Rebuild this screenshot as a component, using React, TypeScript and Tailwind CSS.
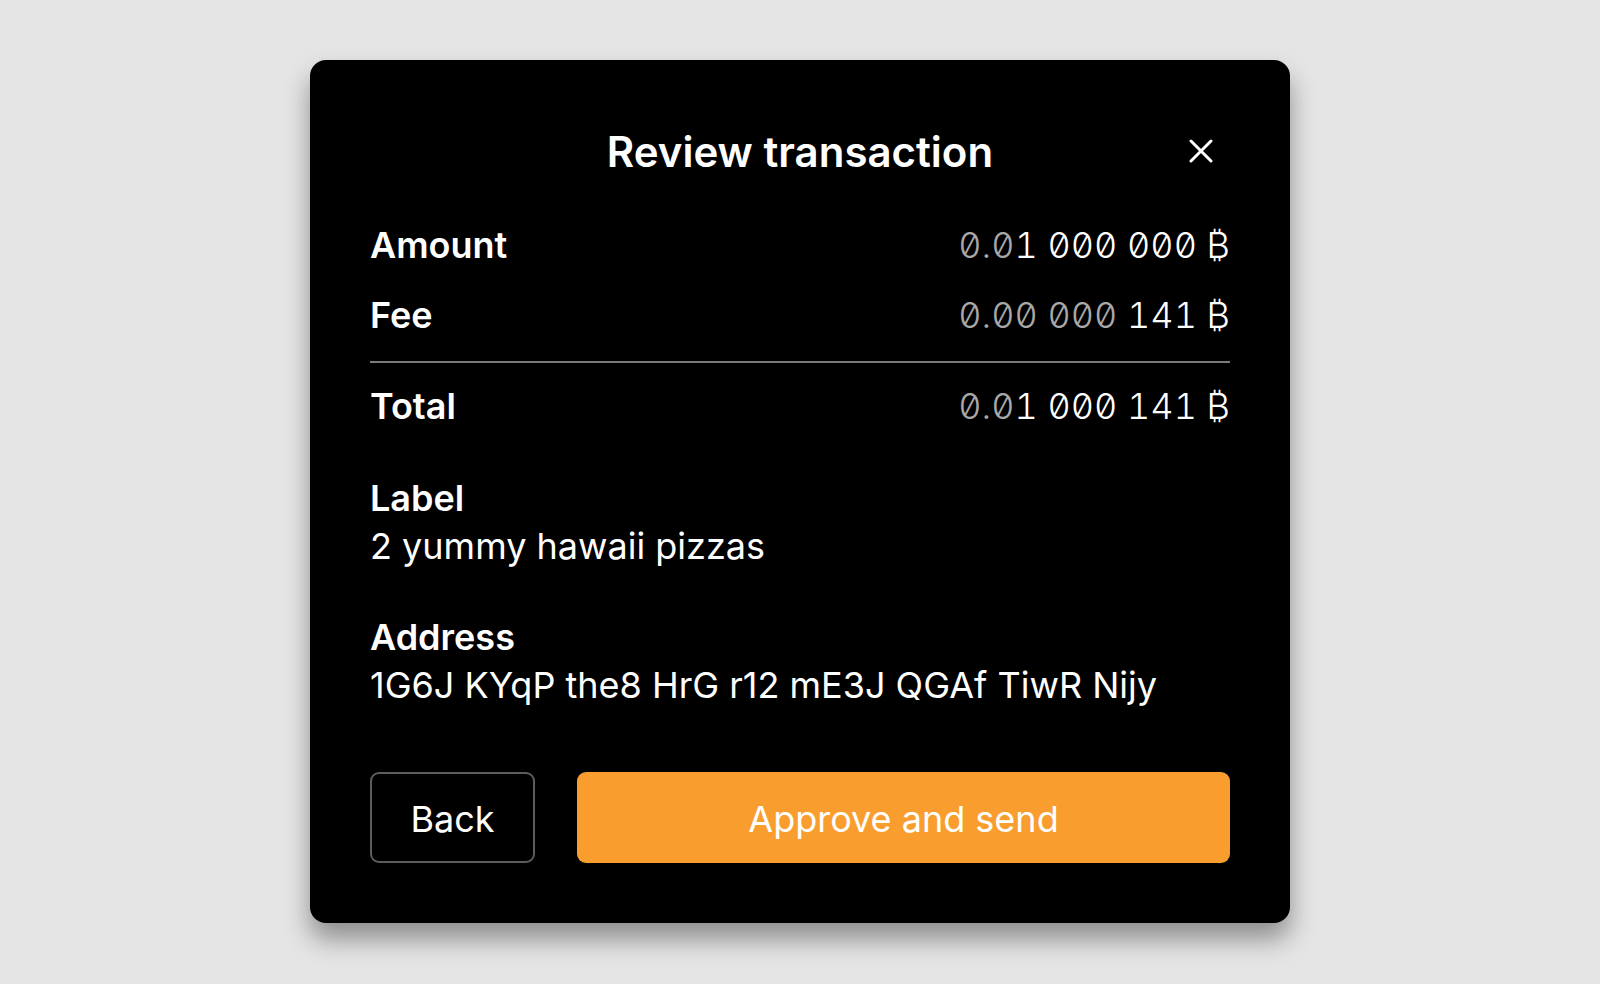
interface Row {
    label: string;
    dim: string;
    rest: string;
}

const rows: Row[] = [
    { label: "Amount", dim: "0.0", rest: "1 000 000" },
    { label: "Fee", dim: "0.00 000", rest: " 141" },
]

const total: Row = { label: "Total", dim: "0.0", rest: "1 000 141" }

function Sats({ dim, rest }: { dim: string; rest: string }) {
    return (
        <span className="text-[36px] leading-[48px] font-[350] whitespace-pre [font-feature-settings:'tnum','zero']">
            <span className="text-[#a8a8a8]">{dim}</span>
            <span className="text-white">{rest} ₿</span>
        </span>
    )
}

function AmountRow({ row }: { row: Row }) {
    return (
        <div className="flex items-center justify-between h-[48px]">
            <span className="text-[36px] leading-[48px] font-semibold">{row.label}</span>
            <Sats dim={row.dim} rest={row.rest} />
        </div>
    )
}

export default function App() {
    return (
        <div className="min-h-screen bg-[#e5e5e5] flex justify-center pt-[60px] font-['Inter',sans-serif]">
            <div className="w-[980px] h-[863px] bg-black rounded-[16px] text-white px-[60px] pt-[60px] pb-[60px] shadow-[0_16px_26px_rgba(0,0,0,0.38)] flex flex-col">
                <div className="relative h-[64px] flex items-center justify-center">
                    <h1 className="text-[42px] leading-[64px] font-semibold">Review transaction</h1>
                    <button className="absolute right-[17px] top-[19px] text-white">
                        <svg width="24" height="24" viewBox="0 0 24 24" fill="none" stroke="currentColor" strokeWidth="3" strokeLinecap="round">
                            <path d="M2 2L22 22M22 2L2 22" />
                        </svg>
                    </button>
                </div>

                <div className="mt-[37px] flex flex-col gap-[22px]">
                    {rows.map((r) => (
                        <AmountRow key={r.label} row={r} />
                    ))}
                </div>
                <div className="mt-[22px] h-[2px] bg-[#7a7a7a]" />
                <div className="mt-[19px]">
                    <AmountRow row={total} />
                </div>

                <div className="mt-[44px]">
                    <div className="text-[36px] leading-[48px] font-semibold">Label</div>
                    <div className="text-[36px] leading-[48px]">2 yummy hawaii pizzas</div>
                </div>
                <div className="mt-[43px]">
                    <div className="text-[36px] leading-[48px] font-semibold">Address</div>
                    <div className="text-[36px] leading-[48px]">1G6J KYqP the8 HrG r12 mE3J QGAf TiwR Nijy</div>
                </div>

                <div className="mt-[63px] flex gap-[42px]">
                    <button className="w-[165px] h-[91px] pt-[3px] rounded-[9px] border-2 border-[#5c5c5c] text-[36px] text-white">
                        Back
                    </button>
                    <button className="flex-1 h-[91px] pt-[3px] rounded-[9px] bg-[#f99d2e] text-[36px] text-white">
                        Approve and send
                    </button>
                </div>
            </div>
        </div>
    )
}
